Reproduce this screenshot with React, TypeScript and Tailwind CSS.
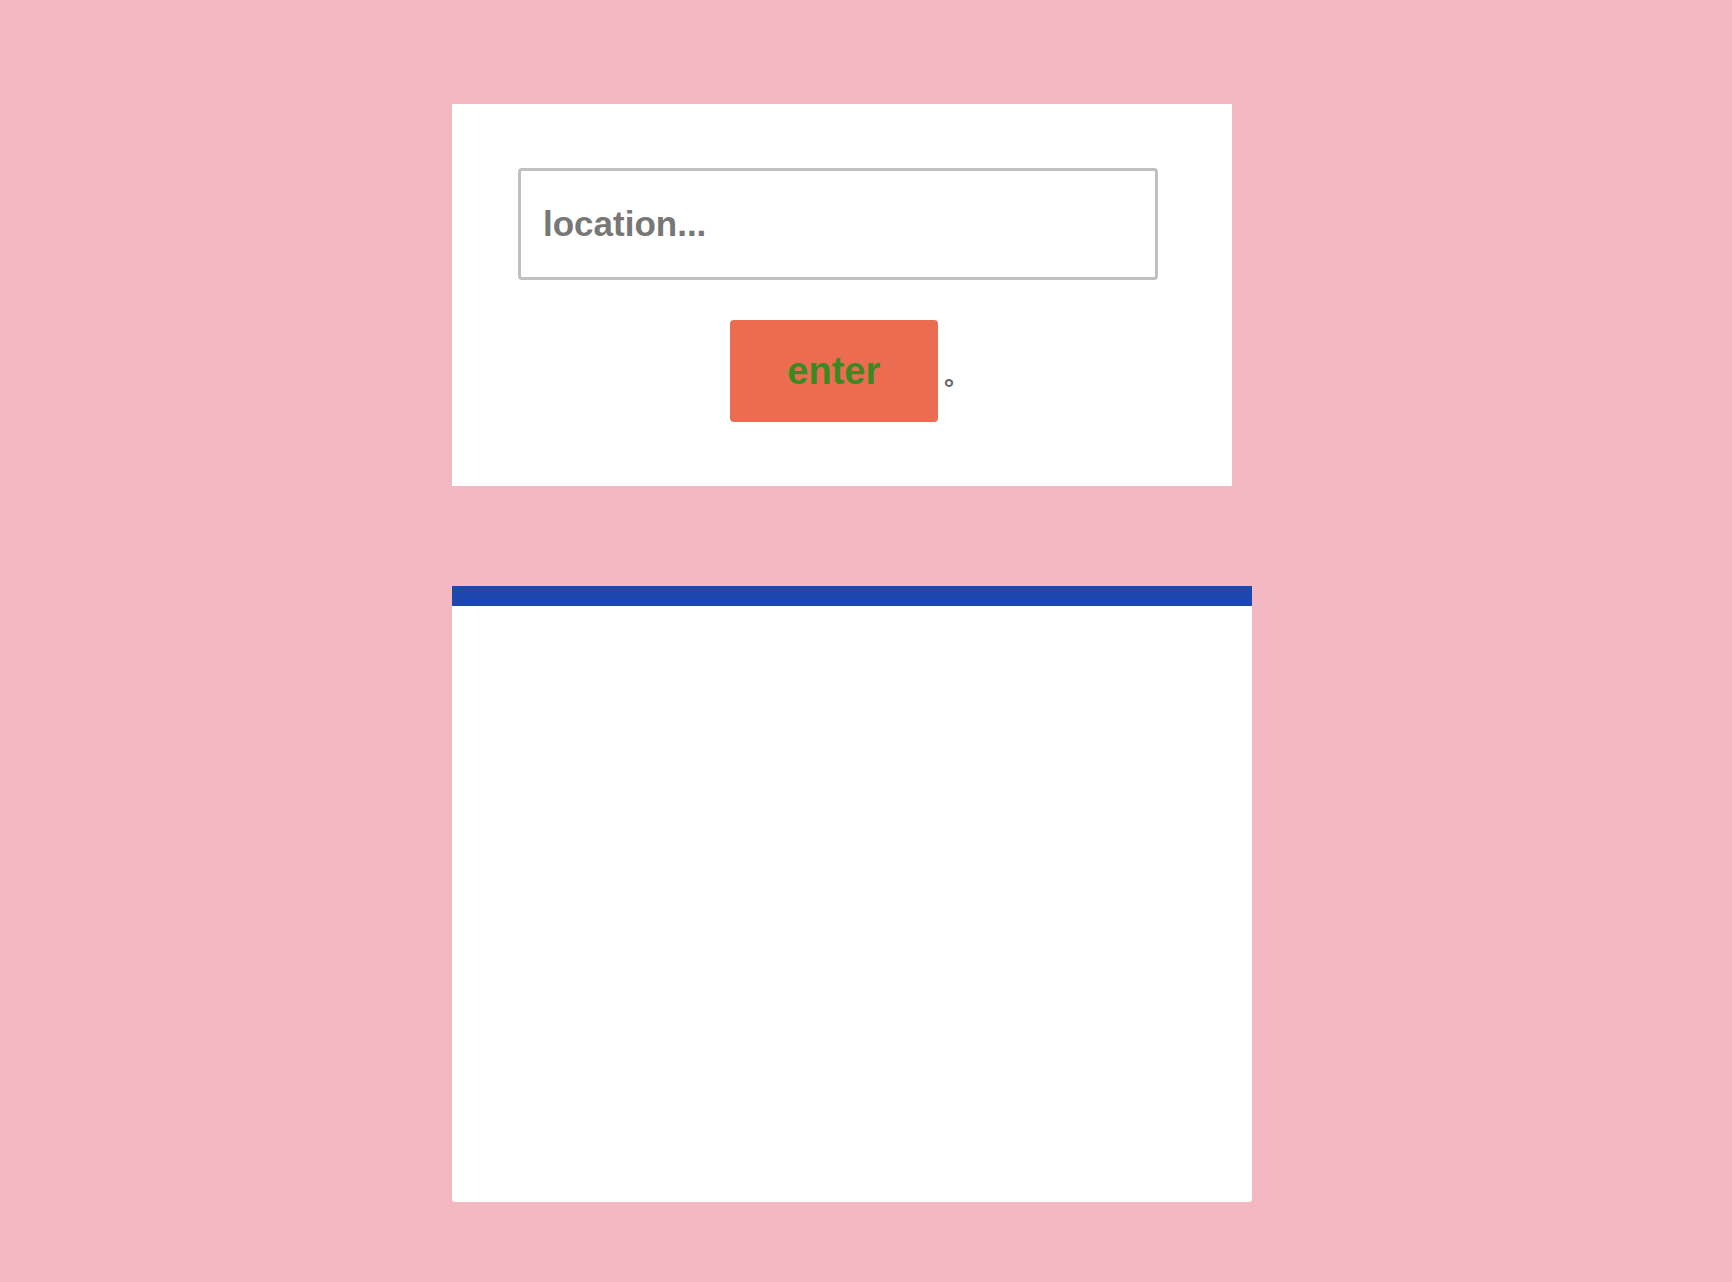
export default function App() {
  return (
    <div className="min-h-screen w-full bg-[#f4b8c3] pt-[104px] pb-[80px] font-['Liberation_Sans',Arial,sans-serif]">
      <div className="mx-auto flex w-[828px] flex-col items-start">
        {/* search card */}
        <div className="flex w-[780px] flex-col bg-white pt-[64px] pb-[64px] pl-[66px]">
          <input
            type="text"
            placeholder="location..."
            className="h-[112px] w-[640px] rounded-[4px] border-[3px] border-[#c0c0c0] px-[22px] text-[35px] font-bold text-[#777] outline-none placeholder:text-[#777]"
          />
          <div className="mt-[40px] flex w-[640px] items-center justify-center pl-[8px]">
            <button
              type="button"
              className="h-[102px] w-[208px] rounded-[4px] bg-[#ec6c52] text-[38px] font-bold text-[#3a8a22]"
            >
              enter
            </button>
            <span className="ml-[6px] mt-[34px] text-[26px] font-bold leading-none text-[#666]">°</span>
          </div>
        </div>

        {/* result card */}
        <div className="mt-[100px] flex h-[616px] w-[800px] flex-col overflow-hidden rounded-b-[3px] bg-white">
          <div className="h-[20px] w-full bg-[#1c47ae]" />
        </div>
      </div>
    </div>
  );
}
